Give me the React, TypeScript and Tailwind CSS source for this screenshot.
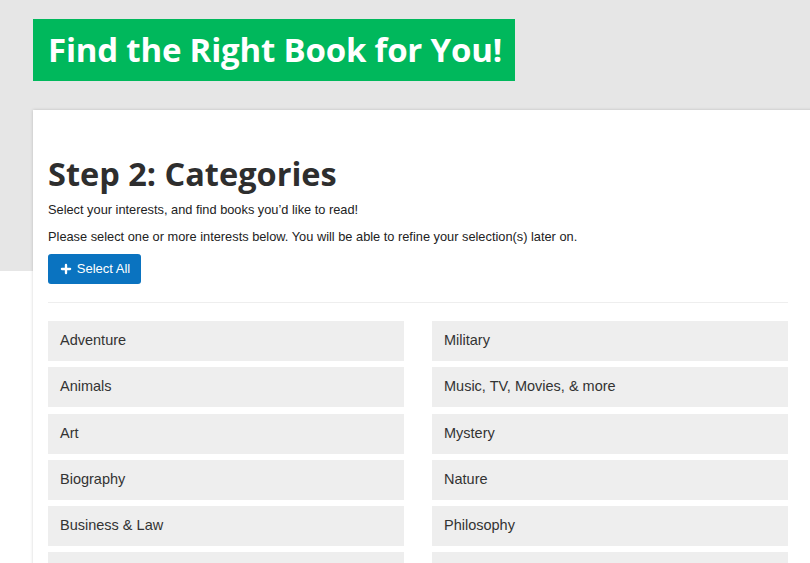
import { Plus } from 'lucide-react';

const leftColumn = ['Adventure', 'Animals', 'Art', 'Biography', 'Business & Law', 'Classics'];
const rightColumn = ['Military', 'Music, TV, Movies, & more', 'Mystery', 'Nature', 'Philosophy', 'Poetry'];

function CategoryTile({ label }: { label: string }) {
  return (
    <button className="flex h-10 w-full items-center bg-[#eeeeee] px-3 text-left text-[14.5px] text-[#333]">
      {label}
    </button>
  );
}

export default function App() {
  return (
    <div className="relative h-[563px] w-[810px] overflow-hidden bg-white font-['Liberation_Sans',Arial,sans-serif]">
      {/* grey band behind the header */}
      <div className="absolute inset-x-0 top-0 h-[271px] bg-[#e6e6e6]" />

      <div className="relative pl-[33px] pt-[19px]">
        <div className="inline-flex h-[62px] w-[482px] items-center bg-[#00b85c] pl-[15px]">
          <h1 className="font-['Open_Sans',sans-serif] text-[33px] font-bold tracking-[-0.2px] text-white">
            Find the Right Book for You!
          </h1>
        </div>

        <div className="mt-[29px] w-[790px] bg-white px-[15px] pt-[42px] pb-8 shadow-[0_0_3px_rgba(0,0,0,0.18)]">
          <h2 className="font-['Open_Sans',sans-serif] text-[32.5px] font-bold leading-[44px] text-[#2e2e2e]">
            Step 2: Categories
          </h2>
          <p className="mt-[5px] text-[12.8px] leading-[18px] text-[#222]">
            Select your interests, and find books you’d like to read!
          </p>
          <p className="mt-[9px] text-[12.8px] leading-[18px] text-[#222]">
            Please select one or more interests below. You will be able to refine your selection(s) later on.
          </p>
          <button className="mt-[8px] flex h-[30px] w-[93px] items-center justify-center gap-[4px] rounded-[3px] bg-[#0a73c0] text-[13px] text-white">
            <Plus className="h-[14px] w-[14px]" strokeWidth={4} />
            Select All
          </button>

          <hr className="mt-[18px] w-[740px] border-[#eeeeee]" />

          <div className="mt-[18px] grid w-[740px] grid-cols-2 gap-x-[28px] gap-y-[6.3px]">
            {leftColumn.map((label, i) => (
              <div key={label} className="contents">
                <CategoryTile label={label} />
                <CategoryTile label={rightColumn[i]} />
              </div>
            ))}
          </div>
        </div>
      </div>
    </div>
  );
}
